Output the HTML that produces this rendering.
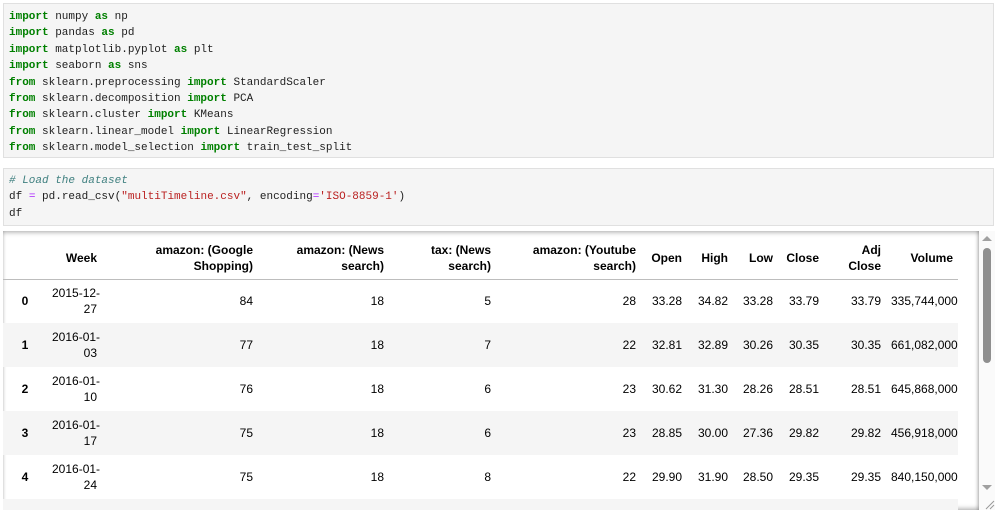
<!DOCTYPE html>
<html><head><meta charset="utf-8"><style>
*{margin:0;padding:0;box-sizing:border-box}
body{width:999px;height:515px;background:#fff;position:relative;overflow:hidden;font-family:"Liberation Sans",sans-serif}
.cell{position:absolute;left:3px;width:991px;background:#f5f5f5;border:1px solid #e0e0e0}
pre{font-family:"Liberation Mono",monospace;font-size:11px;line-height:16.4px;color:#212121;position:absolute;left:5px;white-space:pre}
.k{color:#008000;font-weight:bold}
.o{color:#aa22ff}
.s{color:#ba2121}
.c{color:#408080;font-style:italic}
.out{position:absolute;left:3px;top:231px;width:976px;height:279px;overflow:hidden;box-shadow:inset 0 3px 4px -1px rgba(0,0,0,.25),inset -3px 0 4px -2px rgba(0,0,0,.2),inset 0 -3px 4px -1px rgba(0,0,0,.25)}
table{position:absolute;left:0;top:6px;border-collapse:collapse;font-size:12px;color:#000;table-layout:fixed;width:955px}
th,td{text-align:right;padding:0 5px;vertical-align:middle;white-space:nowrap}
thead th{height:42px;line-height:16px;border-bottom:1px solid #bdbdbd;font-weight:bold}
tbody td,tbody th{height:44px;line-height:16px}
tbody tr:nth-child(even){background:#f5f5f5}
tbody th{text-align:center;font-weight:bold}
.sb{position:absolute;left:979px;top:231px;width:16px;height:279px;background:#fafafa}
.thumb{position:absolute;left:983px;top:248px;width:8px;height:115px;background:#8f8f8f;border-radius:4px}
</style></head><body>
<div class="cell" style="top:3px;height:155px">
<pre style="top:5px"><span class="k">import</span> numpy <span class="k">as</span> np
<span class="k">import</span> pandas <span class="k">as</span> pd
<span class="k">import</span> matplotlib.pyplot <span class="k">as</span> plt
<span class="k">import</span> seaborn <span class="k">as</span> sns
<span class="k">from</span> sklearn.preprocessing <span class="k">import</span> StandardScaler
<span class="k">from</span> sklearn.decomposition <span class="k">import</span> PCA
<span class="k">from</span> sklearn.cluster <span class="k">import</span> KMeans
<span class="k">from</span> sklearn.linear_model <span class="k">import</span> LinearRegression
<span class="k">from</span> sklearn.model_selection <span class="k">import</span> train_test_split</pre>
</div>
<div class="cell" style="top:168px;height:58px">
<pre style="top:4px"><span class="c"># Load the dataset</span>
df <span class="o">=</span> pd.read_csv(<span class="s">"multiTimeline.csv"</span>, encoding<span class="o">=</span><span class="s">'ISO-8859-1'</span>)
df</pre>
</div>
<div class="out">
<table>
<colgroup><col style="width:44px"><col style="width:55px"><col style="width:156px"><col style="width:131px"><col style="width:107px"><col style="width:145px"><col style="width:46px"><col style="width:46px"><col style="width:45px"><col style="width:46px"><col style="width:62px"><col style="width:72px"></colgroup>
<thead><tr><th></th><th>Week</th><th>amazon: (Google<br>Shopping)</th><th>amazon: (News<br>search)</th><th>tax: (News<br>search)</th><th>amazon: (Youtube<br>search)</th><th>Open</th><th>High</th><th>Low</th><th>Close</th><th>Adj<br>Close</th><th>Volume</th></tr></thead>
<tbody>
<tr><th>0</th><td>2015-12-<br>27</td><td>84</td><td>18</td><td>5</td><td>28</td><td>33.28</td><td>34.82</td><td>33.28</td><td>33.79</td><td>33.79</td><td>335,744,000</td></tr>
<tr><th>1</th><td>2016-01-<br>03</td><td>77</td><td>18</td><td>7</td><td>22</td><td>32.81</td><td>32.89</td><td>30.26</td><td>30.35</td><td>30.35</td><td>661,082,000</td></tr>
<tr><th>2</th><td>2016-01-<br>10</td><td>76</td><td>18</td><td>6</td><td>23</td><td>30.62</td><td>31.30</td><td>28.26</td><td>28.51</td><td>28.51</td><td>645,868,000</td></tr>
<tr><th>3</th><td>2016-01-<br>17</td><td>75</td><td>18</td><td>6</td><td>23</td><td>28.85</td><td>30.00</td><td>27.36</td><td>29.82</td><td>29.82</td><td>456,918,000</td></tr>
<tr><th>4</th><td>2016-01-<br>24</td><td>75</td><td>18</td><td>8</td><td>22</td><td>29.90</td><td>31.90</td><td>28.50</td><td>29.35</td><td>29.35</td><td>840,150,000</td></tr>
<tr><th></th><td></td><td></td><td></td><td></td><td></td><td></td><td></td><td></td><td></td><td></td><td></td></tr>
</tbody></table>
</div>
<div class="sb"></div>
<div class="thumb"></div>
<svg style="position:absolute;left:980px;top:234px" width="14" height="10"><path d="M2 7 L7 2 L12 7 Z" fill="#a0a0a0"/></svg>
<svg style="position:absolute;left:980px;top:482px" width="14" height="10"><path d="M2 3 L7 8 L12 3 Z" fill="#a0a0a0"/></svg>
<svg style="position:absolute;left:984px;top:499px" width="12" height="12"><path d="M2 10 L10 2 M6 10 L10 6" stroke="#999" stroke-width="1"/></svg>
</body></html>
